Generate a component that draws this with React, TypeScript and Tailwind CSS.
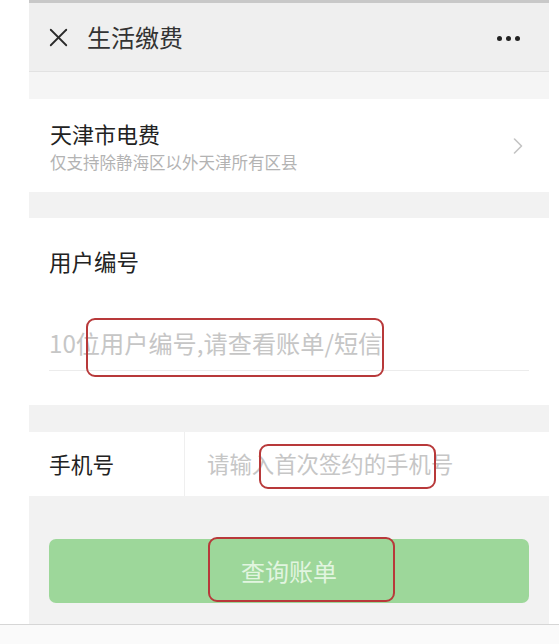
import { X, ChevronRight } from "lucide-react";

const FONT = { fontFamily: '"Noto Sans CJK SC", "Noto Sans", sans-serif' };

// red hand-drawn annotation boxes over the screenshot
const MARKS = [
  { key: "account", className: "left-[86px] top-[318px] w-[298px] h-[59px]" },
  { key: "phone", className: "left-[259px] top-[444px] w-[177px] h-[45px]" },
  { key: "button", className: "left-[208px] top-[537px] w-[187px] h-[65px]" },
];

export default function App() {
  return (
    <div className="relative w-[559px] h-[644px] bg-white overflow-hidden" style={FONT}>
      <div className="flex flex-col w-[520px] ml-[29px] h-[624px] bg-[#f2f2f2]">
        {/* status strip */}
        <div className="h-[3px] bg-[#c8c8c8]" />

        {/* Header */}
        <div className="flex items-center h-[69px] bg-[#efefef] border-b border-[#e2e2e2] pl-[14px] pr-[29px]">
          <X className="w-[31px] h-[31px] text-[#2a2a2a]" strokeWidth={1.4} />
          <span className="ml-[13px] text-[24px] text-[#333]">生活缴费</span>
          <div className="ml-auto mt-[2px] flex gap-[4px]">
            <span className="w-[5px] h-[5px] rounded-full bg-[#222]" />
            <span className="w-[5px] h-[5px] rounded-full bg-[#222]" />
            <span className="w-[5px] h-[5px] rounded-full bg-[#222]" />
          </div>
        </div>

        <div className="h-[27px] bg-[#f5f5f5]" />

        {/* Biller card */}
        <div className="flex items-center h-[93px] bg-white pl-[21px] pr-[17px]">
          <div className="flex flex-col">
            <span className="text-[22px] leading-[28px] text-[#222]">天津市电费</span>
            <span className="mt-[5px] text-[16.5px] leading-[20px] text-[#b3b3b3]">
              仅支持除静海区以外天津所有区县
            </span>
          </div>
          <ChevronRight className="ml-auto w-[28px] h-[28px] text-[#c4c4c4]" strokeWidth={1.4} />
        </div>

        <div className="h-[26px]" />

        {/* Account number */}
        <div className="flex flex-col h-[187px] bg-white px-[20px]">
          <span className="mt-[28px] text-[22.5px] leading-[30px] text-[#222]">用户编号</span>
          <div className="mt-[52px] pb-[12px] border-b border-[#ececec] text-[24.2px] leading-[30px] text-[#c6c6c6]">
            10位用户编号,请查看账单/短信
          </div>
        </div>

        <div className="h-[27px]" />

        {/* Phone row */}
        <div className="flex h-[64px] bg-white">
          <div className="flex items-center w-[156px] pl-[20px] text-[21.7px] text-[#222] border-r border-[#efefef]">
            手机号
          </div>
          <div className="flex items-center pl-[22px] text-[22.4px] text-[#c6c6c6]">
            请输入首次签约的手机号
          </div>
        </div>

        {/* Query button */}
        <div className="px-[20px] pt-[43px]">
          <div className="flex items-center justify-center h-[64px] rounded-[7px] bg-[#9dd79a] text-[24px] text-[#e2f5e0]">
            查询账单
          </div>
        </div>
      </div>
      <div className="h-px bg-[#d6d6d6]" />
      <div className="h-[19px] bg-[#fafafa]" />

      {MARKS.map((m) => (
        <div
          key={m.key}
          className={`absolute border-2 border-[#b8393a] rounded-[9px] ${m.className}`}
        />
      ))}
    </div>
  );
}
